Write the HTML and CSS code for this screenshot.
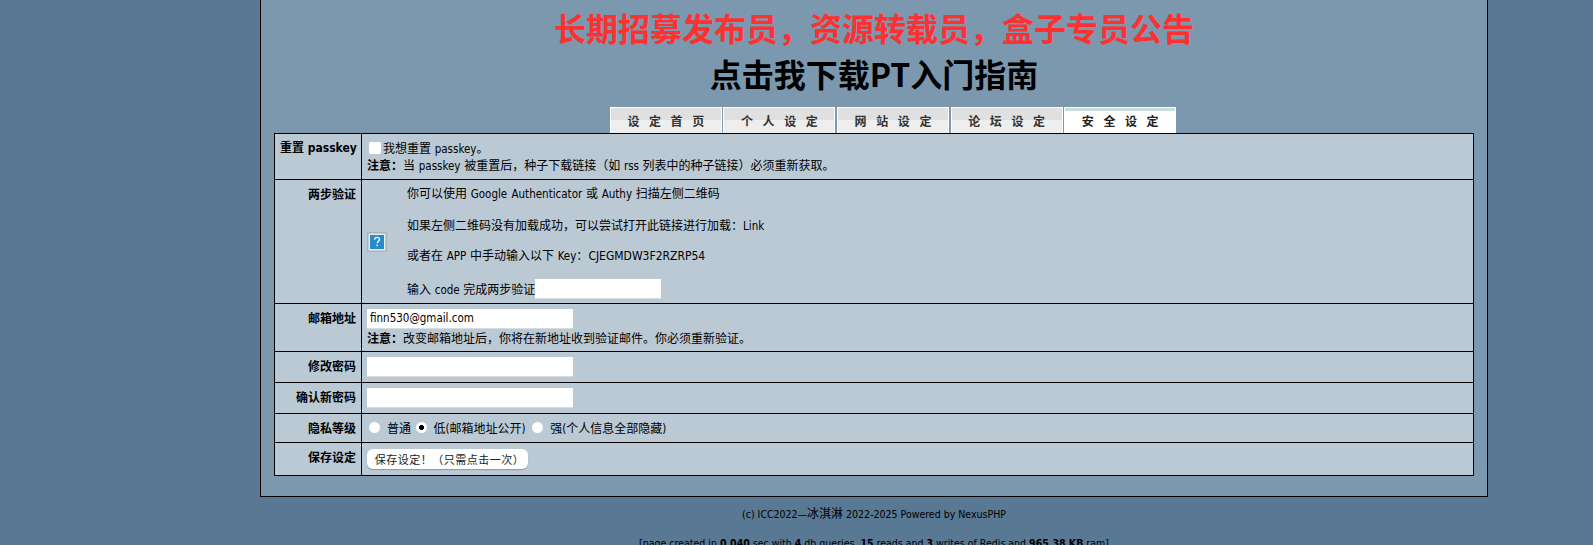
FILE: index.html
```html
<!DOCTYPE html>
<html lang="zh">
<head>
<meta charset="utf-8">
<title>安全设定</title>
<link rel="stylesheet" href="styles.css">
</head>
<body>
<div class="page">
  <main class="box">
    <h2 class="notice"><a class="notice-red" href="#">长期招募发布员，资源转载员，盒子专员公告</a></h2>
    <h2 class="notice notice-second"><a class="notice-black" href="#">点击我下载PT入门指南</a></h2>
    <nav class="tabs">
      <a class="tab" href="#">设定首页</a>
      <a class="tab" href="#">个人设定</a>
      <a class="tab" href="#">网站设定</a>
      <a class="tab" href="#">论坛设定</a>
      <a class="tab tab-active" href="#">安全设定</a>
    </nav>
    <table class="form">
      <tr class="r1">
        <th>重置 <span class="lat">passkey</span></th>
        <td>
          <div class="line"><input class="check" type="checkbox"><span>我想重置 <span class="lat">passkey</span>。</span></div>
          <div class="note"><b>注意：</b>当 <span class="lat">passkey</span> 被重置后，种子下载链接（如 <span class="lat">rss</span> 列表中的种子链接）必须重新获取。</div>
        </td>
      </tr>
      <tr class="r2">
        <th>两步验证</th>
        <td>
          <div class="twofa">
            <svg class="qr" width="20" height="20" viewBox="0 0 20 20" role="img" aria-label="?">
              <rect x="0.5" y="0.5" width="19" height="19" fill="#c3cdd6" stroke="#a9b3bc"/>
              <rect x="2.5" y="2.5" width="15" height="15" fill="#2a8ac8" stroke="#e4eef5"/>
              <path d="M7.6 7.8c0-1.6 1.1-2.4 2.5-2.4s2.4.8 2.4 2.1c0 1.8-2.3 1.9-2.3 3.7" fill="none" stroke="#e8f4fb" stroke-width="1.4"/>
              <rect x="9.4" y="12.6" width="1.5" height="1.7" fill="#e8f4fb"/>
            </svg>
            <div class="twofa-text">
              <p>你可以使用 <span class="lat">Google Authenticator</span> 或 <span class="lat">Authy</span> 扫描左侧二维码</p>
              <p>如果左侧二维码没有加载成功，可以尝试打开此链接进行加载：<span class="lat">Link</span></p>
              <p>或者在 <span class="lat">APP</span> 中手动输入以下 <span class="lat">Key</span>：<span class="lat lat-key">CJEGMDW3F2RZRP54</span></p>
              <p class="code-line"><span>输入 <span class="lat">code</span> 完成两步验证</span><input class="text code" type="text"></p>
            </div>
          </div>
        </td>
      </tr>
      <tr class="r3">
        <th>邮箱地址</th>
        <td>
          <input class="text wide" type="text" value="finn530@gmail.com">
          <div class="note"><b>注意：</b>改变邮箱地址后，你将在新地址收到验证邮件。你必须重新验证。</div>
        </td>
      </tr>
      <tr class="r4"><th>修改密码</th><td><input class="text wide" type="password"></td></tr>
      <tr class="r4"><th>确认新密码</th><td><input class="text wide" type="password"></td></tr>
      <tr class="r5">
        <th>隐私等级</th>
        <td>
          <div class="radios">
            <label class="radio"><span class="dot"></span><span>普通</span></label>
            <label class="radio"><span class="dot dot-on"></span><span>低<span class="lat">(</span>邮箱地址公开<span class="lat">)</span></span></label>
            <label class="radio"><span class="dot"></span><span>强<span class="lat">(</span>个人信息全部隐藏<span class="lat">)</span></span></label>
          </div>
        </td>
      </tr>
      <tr class="r6"><th>保存设定</th><td><button class="save" type="button">保存设定！（只需点击一次）</button></td></tr>
    </table>
  </main>
  <footer class="foot">
    <p>(c) ICC2022—<span class="cjk">冰淇淋</span> 2022-2025 Powered by NexusPHP</p>
    <p>[page created in <b>0.040</b> sec with <b>4</b> db queries, <b>15</b> reads and <b>3</b> writes of Redis and <b>965.38 KB</b> ram]</p>
  </footer>
</div>
</body>
</html>
```

FILE: styles.css
```css
html, body {
  margin: 0;
  height: 545px;
  overflow: hidden;
}
body {
  background: #587893;
  color: #000;
  font: 12px/15px "Noto Sans CJK SC", sans-serif;
  word-spacing: 1px;
}
.lat {
  font-family: "DejaVu Sans Condensed", "DejaVu Sans", sans-serif;
  font-stretch: condensed;
  font-size: 11.5px;
  line-height: 1;
}
.lat-key { font-size: 12px; }
.page {
  margin-left: 260px;
  width: 1228px;
}
.box {
  box-sizing: border-box;
  height: 497px;
  padding: 0 13px;
  border: 1px solid #000;
  border-top: 0;
  background: #7b98af;
}
.notice {
  margin: 0;
  text-align: center;
  font: bold 32px/40px "Noto Sans CJK SC", sans-serif;
  padding-top: 7px;
}
.notice-second {
  padding-top: 6px;
}
.notice a { text-decoration: none; }
.notice-red { color: #ff3030; }
.notice-black { color: #000; }
.tabs {
  display: flex;
  justify-content: center;
  gap: 1.6px;
  margin-top: 14px;
  padding-left: 38px;
}
.tab {
  box-sizing: border-box;
  width: 112px;
  height: 26px;
  border: 1px solid #fff;
  border-bottom: 0;
  background: linear-gradient(#e0e0e0 50%, #eeeeee 50%);
  color: #333;
  font: bold 12px/25px "Noto Sans CJK SC", sans-serif;
  letter-spacing: 9.6px;
  text-indent: 9.6px;
  text-align: center;
  text-decoration: none;
}
.tab-active {
  background: linear-gradient(#c8dcdc 3px, #fff 3px);
  color: #222;
}
.form {
  width: 100%;
  border-collapse: collapse;
  table-layout: fixed;
  background: #bbc9d5;
}
.form th, .form td {
  border: 1px solid #000;
  vertical-align: top;
  padding: 5px;
}
.form th {
  width: 76px;
  padding-top: 6px;
  text-align: right;
  font-weight: bold;
  white-space: nowrap;
}
.form .r1 th { padding-top: 5px; }
.form .r2 td { padding-bottom: 4px; }
.form th .lat { font-size: 12px; }
.form td { text-align: left; }
.r1 { height: 46px; }
.r2 { height: 119px; }
.r3 { height: 48px; }
.r4 { height: 31px; }
.r5 { height: 28px; }
.r6 { height: 33px; }
.line { display: flex; align-items: center; height: 16px; margin-top: 1px; }
.check {
  appearance: none;
  box-sizing: border-box;
  width: 12px;
  height: 12px;
  margin: 0 2px 0 2px;
  border-radius: 2px;
  background: #fff;
}
.note { margin-top: 1px; }
.twofa {
  display: flex;
  align-items: center;
  gap: 20px;
}
.twofa-text p { margin: 0 0 16px; }
.twofa-text p:nth-child(2) { margin-bottom: 15px; }
.twofa-text p:last-child { margin-bottom: 0; }
.code-line { display: flex; align-items: center; margin-top: -3px; }
.text {
  box-sizing: border-box;
  display: block;
  height: 20px;
  margin: 0;
  padding: 1px 3px;
  border: 0;
  border-bottom: 1px solid #d5dde3;
  background: #fff;
  color: #000;
  font: 11.5px "DejaVu Sans Condensed", "DejaVu Sans", sans-serif;
  font-stretch: condensed;
}
.wide { width: 206px; }
.code { width: 126px; }
.radios { display: flex; align-items: center; gap: 4.5px; height: 18px; }
.radio { display: flex; align-items: center; gap: 7px; }
.radio:first-child { margin-right: -2px; }
.dot {
  box-sizing: border-box;
  width: 11px;
  height: 11px;
  margin-left: 2px;
  border-radius: 50%;
  background: #fff;
}
.dot-on { background: radial-gradient(circle, #000 2.2px, #fff 2.8px); }
.save {
  display: block;
  width: 161px;
  height: 20px;
  margin-top: 1px;
  padding: 0 0 0 4px;
  border: 0;
  border-radius: 6px;
  background: #fff;
  box-shadow: 0 1px 1px rgba(0, 0, 0, .25);
  color: #222;
  font: 11px "Noto Sans CJK SC", sans-serif;
  letter-spacing: .5px;
}
.foot {
  text-align: center;
  padding-top: 10px;
  font-family: "DejaVu Sans Condensed", "DejaVu Sans", sans-serif;
  font-stretch: condensed;
  font-size: 10.5px;
  line-height: 14px;
  word-spacing: 0;
}
.foot p { margin: 0 0 15px; }
.cjk { font-family: "Noto Sans CJK SC", sans-serif; font-size: 12px; line-height: 1; }
```
